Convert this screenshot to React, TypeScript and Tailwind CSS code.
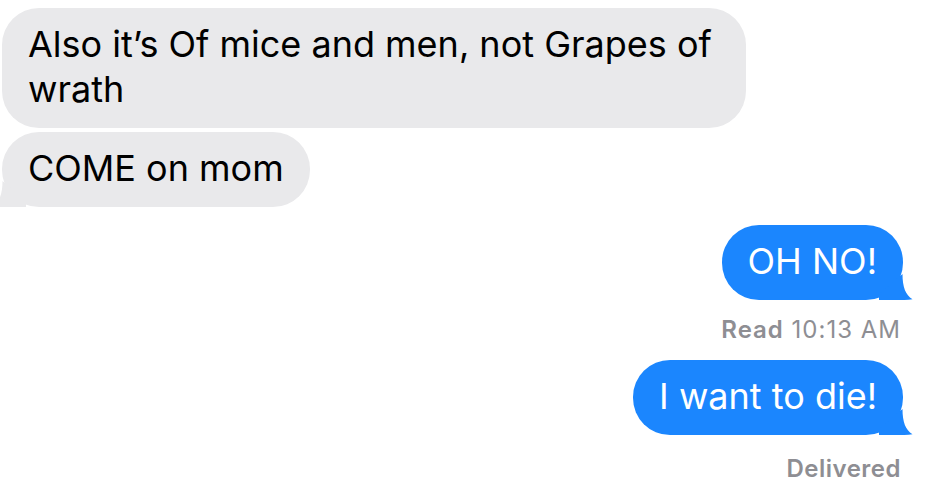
import React from "react";

const BLUE = "#1b86fe";
const GRAY = "#e9e9eb";

const TAIL =
  "M0 20 L23.5 0 C23.5 13 26.5 21 33.5 25.3 C25 26.6 12 26 0 26 Z";

function TailRight({ color }: { color: string }) {
  return (
    <svg
      className="absolute bottom-0 right-[-10px]"
      width="34"
      height="26"
      viewBox="0 0 34 26"
    >
      <path d={TAIL} fill={color} />
    </svg>
  );
}

function TailLeft({ color }: { color: string }) {
  return (
    <svg
      className="absolute bottom-0 left-[-10px]"
      width="34"
      height="26"
      viewBox="0 0 34 26"
    >
      <g transform="translate(34 0) scale(-1 1)">
        <path d={TAIL} fill={color} />
      </g>
    </svg>
  );
}

export default function App() {
  return (
    <div
      className="w-[942px] h-[488px] bg-white overflow-hidden flex flex-col"
      style={{ fontFamily: "Inter, 'Noto Sans', sans-serif" }}
    >
      <div className="pt-[8px] pl-[2px] flex flex-col items-start gap-[4px]">
        <div
          className="w-[744px] rounded-[37px] pl-[26px] pr-[26px] pt-[14px] pb-[16px] text-[36px] leading-[45px] text-black"
          style={{ backgroundColor: GRAY }}
        >
          Also it’s Of mice and men, not Grapes of wrath
        </div>
        <div
          className="relative rounded-[37px] pl-[26px] pr-[26px] pt-[14px] pb-[16px] text-[36px] leading-[45px] text-black"
          style={{ backgroundColor: GRAY }}
        >
          COME on mom
          <TailLeft color={GRAY} />
        </div>
      </div>

      <div className="mt-[18px] pr-[39px] flex flex-col items-end">
        <div
          className="relative rounded-[37px] px-[26px] pt-[14px] pb-[16px] text-[36px] leading-[45px] text-white"
          style={{ backgroundColor: BLUE }}
        >
          OH NO!
          <TailRight color={BLUE} />
        </div>
        <div className="mt-[17px] mr-[2px] text-[24px] leading-[26px] tracking-[1px] text-[#8e8e93]">
          <span className="font-semibold">Read</span> 10:13 AM
        </div>
        <div
          className="relative mt-[17px] rounded-[37px] px-[26px] pt-[14px] pb-[16px] text-[36px] leading-[45px] text-white"
          style={{ backgroundColor: BLUE }}
        >
          I want to die!
          <TailRight color={BLUE} />
        </div>
        <div className="mt-[21px] mr-[2px] text-[24px] leading-[26px] tracking-[0.5px] font-semibold text-[#8e8e93]">
          Delivered
        </div>
      </div>
    </div>
  );
}
